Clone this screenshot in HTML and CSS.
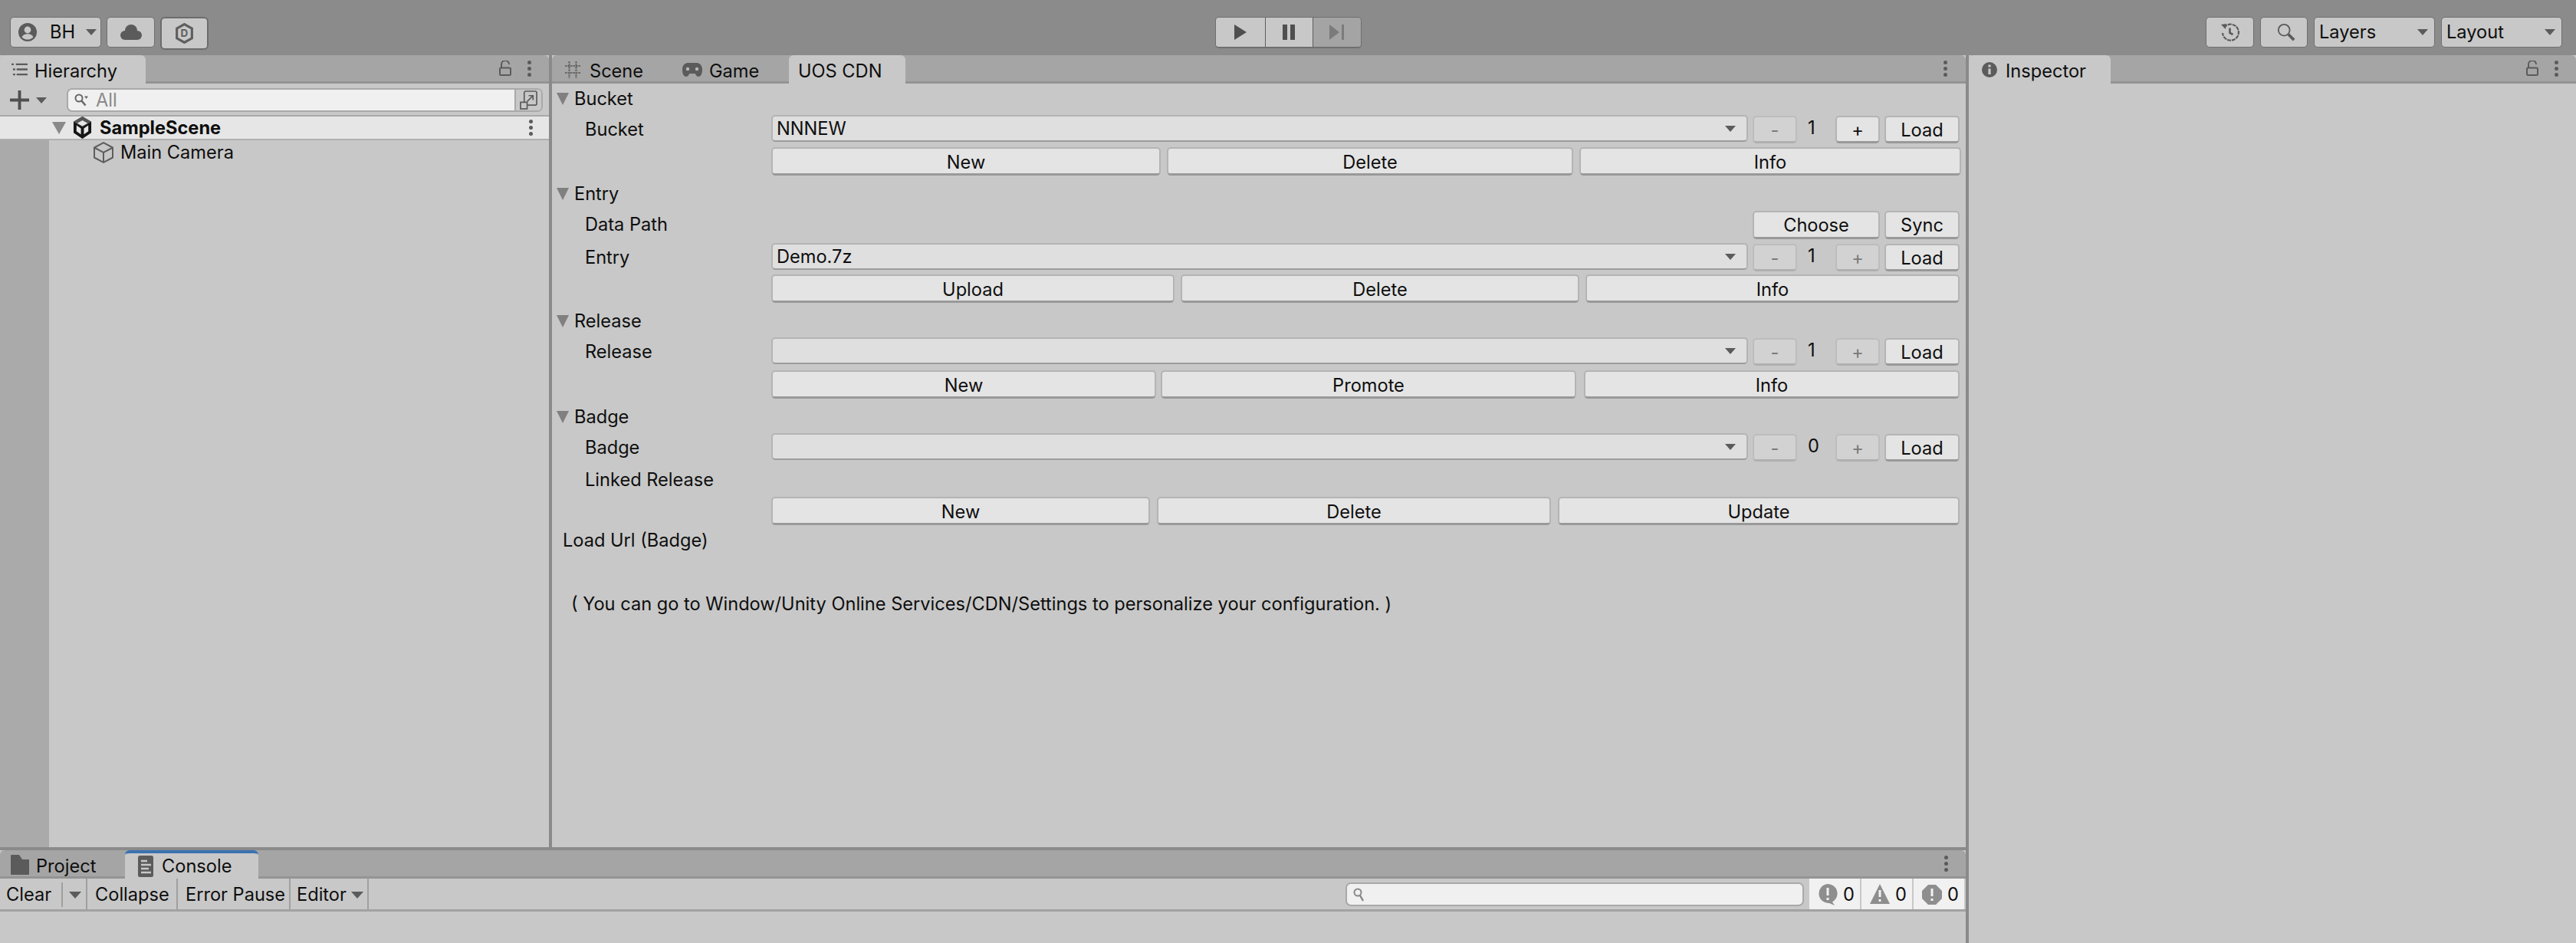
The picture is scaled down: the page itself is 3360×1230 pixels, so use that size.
FILE: index.html
```html
<!DOCTYPE html>
<html lang="en">
<head>
<meta charset="utf-8">
<title>Unity Editor - UOS CDN</title>
<link rel="stylesheet" href="styles.css">
</head>
<body>
<div class="app">
  <header class="toolbar">
    <div class="tb-left">
      <div class="tool tool-account">
        <svg class="ic-user" viewBox="0 0 24 24"><circle cx="12" cy="12" r="12" fill="#5b5b5b"/><circle cx="12" cy="9" r="4.4" fill="#c8c8c8"/><path d="M4.5 18.5c1.5-3.2 4-4.2 7.5-4.2s6 1 7.5 4.2c-2 2-4.6 3.1-7.5 3.1s-5.500-1.100-7.500-3.100z" fill="#c8c8c8"/></svg>
        <span class="tool-name">BH</span>
        <span class="tri tri-dark tri-account"></span>
      </div>
      <div class="tool tool-cloud">
        <svg class="ic-cloud" viewBox="0 0 28 20"><circle cx="14" cy="8" r="8" fill="#5b5b5b"/><circle cx="6" cy="14" r="6" fill="#5b5b5b"/><circle cx="22" cy="14" r="6" fill="#5b5b5b"/><rect x="6" y="10" width="16" height="10" fill="#5b5b5b"/></svg>
      </div>
      <div class="tool tool-d">
        <svg class="ic-hex" viewBox="0 0 22 26"><path d="M11 1.500 20.500 7v12L11 24.500 1.500 19V7z" fill="none" stroke="#5e5e5e" stroke-width="3"/><text x="11" y="17.500" text-anchor="middle" class="hex-letter">D</text></svg>
      </div>
    </div>
    <div class="play">
      <div class="play-btn play-first"><svg class="ic-play" viewBox="0 0 16 20"><path d="M0 0 16 10 0 20z" fill="#4f4f4f"/></svg></div>
      <div class="play-btn"><svg class="ic-pause" viewBox="0 0 16 20"><path d="M0 0h6v20H0zM10 0h6v20h-6z" fill="#4f4f4f"/></svg></div>
      <div class="play-btn play-off"><svg class="ic-step" viewBox="0 0 20 20"><path d="M0 0 13 10 0 20zM16 0h3v20h-3z" fill="#7b7b7b"/></svg></div>
    </div>
    <div class="tb-right">
      <div class="tool tool-sq"><svg class="ic-history" viewBox="0 0 26 26"><path d="M5 7A10.500 10.500 0 1 1 3 14" fill="none" stroke="#5b5b5b" stroke-width="2.200" stroke-dasharray="5 1"/><path d="M1 3l7-1-1 7z" fill="#5b5b5b"/><path d="M12.500 7.500v6.500l4 2" fill="none" stroke="#5b5b5b" stroke-width="2.600"/></svg></div>
      <div class="tool tool-sq2"><svg class="ic-search" viewBox="0 0 26 26"><circle cx="10" cy="10" r="8" fill="none" stroke="#5b5b5b" stroke-width="2"/><path d="M16 16l8 8" stroke="#5b5b5b" stroke-width="4"/></svg></div>
      <div class="tool tool-menu"><span>Layers</span><span class="tri tri-dark"></span></div>
      <div class="tool tool-menu"><span>Layout</span><span class="tri tri-dark"></span></div>
    </div>
  </header>

  <main class="workspace">
    <div class="left-area">
      <div class="upper">
        <section class="panel panel-hier">
          <div class="tabstrip">
            <div class="tab tab-active tab-hier">
              <svg class="ic-tab" viewBox="0 0 22 20"><path d="M0 3h3M6 3h16M2 10h3M7 10h15M2 17h3M7 17h15" stroke="#5b5b5b" stroke-width="2.400" fill="none"/></svg>
              <span>Hierarchy</span>
            </div>
            <div class="strip-tools">
              <svg class="ic-lock" viewBox="0 0 16 20"><path d="M3 9V5a5 5 0 0 1 10 0" fill="none" stroke="#5b5b5b" stroke-width="2"/><rect x="1" y="9.500" width="14" height="9.500" rx="1.500" fill="none" stroke="#5b5b5b" stroke-width="2"/></svg>
              <span class="dots"><i></i><i></i><i></i></span>
            </div>
          </div>
          <div class="hier-bar">
            <svg class="ic-plus" viewBox="0 0 26 26"><path d="M13 0v26M0 13h26" stroke="#4f4f4f" stroke-width="4"/></svg>
            <span class="tri tri-dark tri-plus"></span>
            <div class="search-field">
              <svg class="ic-mag" viewBox="0 0 18 18"><circle cx="6" cy="6" r="4.500" fill="none" stroke="#666" stroke-width="2"/><path d="M9.500 9.500l5 6" stroke="#666" stroke-width="2.500"/><path d="M13 3.500h5L15.500 7z" fill="#666"/></svg>
              <span class="placeholder">All</span>
              <div class="search-mode">
                <svg class="ic-pop" viewBox="0 0 24 26"><rect x="6" y="1" width="17" height="19" rx="2" fill="none" stroke="#5b5b5b" stroke-width="1.800"/><rect x="1" y="16" width="9" height="9" fill="#c8c8c8" stroke="#5b5b5b" stroke-width="1.800"/><path d="M10 15l8-8M12 7h6v6" fill="none" stroke="#5b5b5b" stroke-width="1.800"/></svg>
              </div>
            </div>
          </div>
          <div class="scene-row">
            <span class="tri tri-grey tri-scene"></span>
            <svg class="ic-unity" viewBox="0 0 26 30"><path d="M13 0 25 7v15L13 30 1 22V7z" fill="#151515"/><path d="M13 0 25 7 13 14 1 7z" fill="#555"/><path d="M13 5l7 4-7 4-7-4zM5 12l6 4v8l-6-4zM21 12l-6 4v8l6-4z" fill="#e6e6e6"/></svg>
            <span class="scene-name">SampleScene</span>
            <span class="dots dots-row"><i></i><i></i><i></i></span>
          </div>
          <div class="tree">
            <div class="tree-gutter"></div>
            <div class="tree-item">
              <svg class="ic-cube" viewBox="0 0 26 28"><path d="M13 1.200 25 7.500v13L13 26.800 1 20.500v-13zM1 7.500l12 6.300 12-6.300M13 13.800v13" fill="none" stroke="#5e5e5e" stroke-width="2" stroke-linejoin="round"/></svg>
              <span>Main Camera</span>
            </div>
          </div>
        </section>

        <section class="panel panel-center">
          <div class="tabstrip">
            <div class="tab tab-scene">
              <svg class="ic-hash" viewBox="0 0 20 22"><path d="M5.500 0v22M14.500 0v22M0 6h20M0 15h20" stroke="#666" stroke-width="2.200" stroke-dasharray="2.500 1"/></svg>
              <span>Scene</span>
            </div>
            <div class="tab tab-game">
              <svg class="ic-game" viewBox="0 0 26 18"><path d="M7 0h12c4 0 7 3.500 7 9s-2 9-5 9c-2 0-3-2-4.500-4h-7C8 16 7 18 5 18c-3 0-5-3.500-5-9s3-9 7-9z" fill="#5b5b5b"/><circle cx="7" cy="8" r="2.200" fill="#b8b8b8"/><circle cx="19" cy="8" r="2.200" fill="#b8b8b8"/></svg>
              <span>Game</span>
            </div>
            <div class="tab tab-active tab-cdn"><span>UOS CDN</span></div>
            <div class="strip-tools"><span class="dots"><i></i><i></i><i></i></span></div>
          </div>

          <div class="form">
            <div class="group">
              <div class="group-head"><span class="tri tri-grey tri-fold"></span><span>Bucket</span></div>
              <div class="row gap5">
                <span class="label">Bucket</span>
                <div class="controls">
                  <div class="dropdown"><span>NNNEW</span><span class="tri tri-dark"></span></div>
                  <div class="stepper"><span class="btn btn-small btn-off">-</span><span class="num">1</span><span class="btn btn-small">+</span></div>
                  <span class="btn btn-load">Load</span>
                </div>
              </div>
              <div class="btn-row cols-bucket"><span class="btn">New</span><span class="btn">Delete</span><span class="btn">Info</span></div>
            </div>

            <div class="group">
              <div class="group-head"><span class="tri tri-grey tri-fold"></span><span>Entry</span></div>
              <div class="row row-path gap5">
                <span class="label">Data Path</span>
                <div class="controls controls-end">
                  <span class="btn btn-choose">Choose</span>
                  <span class="btn btn-load">Sync</span>
                </div>
              </div>
              <div class="row gap4">
                <span class="label">Entry</span>
                <div class="controls">
                  <div class="dropdown"><span>Demo.7z</span><span class="tri tri-dark"></span></div>
                  <div class="stepper"><span class="btn btn-small btn-off">-</span><span class="num">1</span><span class="btn btn-small btn-off">+</span></div>
                  <span class="btn btn-load">Load</span>
                </div>
              </div>
              <div class="btn-row cols-entry"><span class="btn">Upload</span><span class="btn">Delete</span><span class="btn">Info</span></div>
            </div>

            <div class="group">
              <div class="group-head"><span class="tri tri-grey tri-fold"></span><span>Release</span></div>
              <div class="row gap6">
                <span class="label">Release</span>
                <div class="controls">
                  <div class="dropdown"><span></span><span class="tri tri-dark"></span></div>
                  <div class="stepper"><span class="btn btn-small btn-off">-</span><span class="num">1</span><span class="btn btn-small btn-off">+</span></div>
                  <span class="btn btn-load">Load</span>
                </div>
              </div>
              <div class="btn-row cols-release"><span class="btn">New</span><span class="btn">Promote</span><span class="btn">Info</span></div>
            </div>

            <div class="group">
              <div class="group-head"><span class="tri tri-grey tri-fold"></span><span>Badge</span></div>
              <div class="row gap6">
                <span class="label">Badge</span>
                <div class="controls">
                  <div class="dropdown"><span></span><span class="tri tri-dark"></span></div>
                  <div class="stepper"><span class="btn btn-small btn-off">-</span><span class="num">0</span><span class="btn btn-small btn-off">+</span></div>
                  <span class="btn btn-load">Load</span>
                </div>
              </div>
              <div class="row row-linked gap4"><span class="label">Linked Release</span></div>
              <div class="btn-row cols-badge"><span class="btn">New</span><span class="btn">Delete</span><span class="btn">Update</span></div>
            </div>

            <div class="load-url">Load Url (Badge)</div>
            <div class="note">( You can go to Window/Unity Online Services/CDN/Settings to personalize your configuration. )</div>
          </div>
        </section>
      </div>

      <section class="panel panel-console">
        <div class="tabstrip tabstrip-console">
          <div class="tab tab-project">
            <svg class="ic-folder" viewBox="0 0 24 26"><path d="M1 0h10l4 6h9v19a1 1 0 0 1-1 1H1a1 1 0 0 1-1-1V1a1 1 0 0 1 1-1z" fill="#5b5b5b"/></svg>
            <span>Project</span>
          </div>
          <div class="tab tab-active tab-console">
            <svg class="ic-log" viewBox="0 0 20 28"><rect width="20" height="28" rx="2.500" fill="#5b5b5b"/><path d="M4 7h8M4 12h13M4 17h10M4 22h13" stroke="#c8c8c8" stroke-width="2.400"/></svg>
            <span>Console</span>
          </div>
          <div class="strip-tools"><span class="dots"><i></i><i></i><i></i></span></div>
        </div>
        <div class="console-bar">
          <div class="cbtn cbtn-clear"><span>Clear</span><span class="vsep"></span><span class="tri tri-dark"></span></div>
          <div class="cbtn cbtn-collapse">Collapse</div>
          <div class="cbtn cbtn-pause">Error Pause</div>
          <div class="cbtn cbtn-editor"><span>Editor</span><span class="tri tri-dark"></span></div>
          <div class="console-search">
            <svg class="ic-mag2" viewBox="0 0 14 18"><circle cx="6" cy="6" r="4.500" fill="none" stroke="#888" stroke-width="2"/><path d="M9 10l4 7" stroke="#888" stroke-width="2.500"/></svg>
          </div>
          <div class="count">
            <svg class="ic-count" viewBox="0 0 26 28"><path d="M13 0a12.500 12.500 0 0 1 6 23.500l3 4.500-7-3A12.500 12.500 0 1 1 13 0z" fill="#8e8e8e"/><path d="M13 5v10M13 18v3" stroke="#f2f2f2" stroke-width="3"/></svg>
            <span>0</span>
          </div>
          <div class="count">
            <svg class="ic-count" viewBox="0 0 26 28"><path d="M13 0 26 26H0z" fill="#8e8e8e"/><path d="M13 8v9M13 20v3" stroke="#f2f2f2" stroke-width="3"/></svg>
            <span>0</span>
          </div>
          <div class="count">
            <svg class="ic-count" viewBox="0 0 26 28"><path d="M8 1h10l8 8v10l-8 8H8l-8-8V9z" fill="#8e8e8e"/><path d="M13 6v10M13 19v3" stroke="#f2f2f2" stroke-width="3"/></svg>
            <span>0</span>
          </div>
        </div>
      </section>
    </div>

    <section class="panel panel-inspector">
      <div class="tabstrip">
        <div class="tab tab-active tab-inspector">
          <svg class="ic-info" viewBox="0 0 20 20"><circle cx="10" cy="10" r="10" fill="#5b5b5b"/><path d="M10 3.500v3M10 8.500V16" stroke="#c8c8c8" stroke-width="3.200"/></svg>
          <span>Inspector</span>
        </div>
        <div class="strip-tools">
          <svg class="ic-lock" viewBox="0 0 16 20"><path d="M3 9V5a5 5 0 0 1 10 0" fill="none" stroke="#5b5b5b" stroke-width="2"/><rect x="1" y="9.500" width="14" height="9.500" rx="1.500" fill="none" stroke="#5b5b5b" stroke-width="2"/></svg>
          <span class="dots"><i></i><i></i><i></i></span>
        </div>
      </div>
    </section>
  </main>
</div>
</body>
</html>
```

FILE: styles.css
```css
* { box-sizing: border-box; }
html, body { margin: 0; height: 100%; }
body {
  width: 3360px;
  height: 1230px;
  overflow: hidden;
  background: #8a8a8a;
  color: #0e0e0e;
  font: 23.6px/1 Inter, "Liberation Sans", sans-serif;
}
svg { display: block; flex: none; }

.app { display: flex; flex-direction: column; height: 1230px; }

/* top toolbar */
.toolbar {
  height: 72px;
  flex: none;
  display: grid;
  grid-template-columns: 1fr auto 1fr;
  align-items: start;
  padding: 22px 18px 0;
  background: #8b8b8b;
}
.tb-left, .tb-right { display: flex; gap: 7px; }
.tb-left { margin-left: -5px; }
.tb-right { justify-content: flex-end; gap: 8px; }
.tool {
  height: 40px;
  display: flex;
  align-items: center;
  justify-content: center;
  background: #c8c8c8;
  border: 1px solid #6f6f6f;
  border-radius: 5px;
}
.tool-account { width: 119px; justify-content: flex-start; padding-left: 10px; }
.tool-name { margin-left: 17px; }
.tri-account { margin-left: 14px; }
.tool-cloud { width: 63px; }
.tool-d { width: 63px; height: 43px; border: 2px solid #6c6c6c; border-radius: 6px; }
.tool-sq { width: 63px; }
.tool-sq2 { width: 62px; }
.tool-menu { width: 158px; justify-content: space-between; padding: 0 8px 0 6px; }

.ic-user { width: 24px; height: 24px; }
.ic-cloud { width: 28px; height: 20px; }
.ic-hex { width: 23px; height: 27px; }
.hex-letter { font: 700 13px Inter, sans-serif; fill: #5e5e5e; }
.ic-history { width: 26px; height: 26px; }
.ic-search { width: 24px; height: 24px; margin-left: 6px; }

.tri { display: block; flex: none; width: 0; height: 0; border-style: solid; border-color: transparent; border-width: 8px 7px 0; }
.tri-dark { border-top-color: #5b5b5b; }
.tri-grey { border-top-color: #7f7f7f; }

.play { display: flex; height: 41px; border: 1px solid #6f6f6f; border-bottom-width: 2px; border-radius: 5px; overflow: hidden; width: 191px; }
.play-btn { flex: 1; display: flex; align-items: center; justify-content: center; background: #c8c8c8; border-right: 1px solid #5e5e5e; }
.play-first { flex: none; width: 65px; }
.play-off { background: #a4a4a4; border-right: 0; }
.ic-play { width: 16px; height: 20px; }
.ic-pause { width: 16px; height: 20px; }
.ic-step { width: 20px; height: 20px; }

/* workspace */
.workspace { flex: 1; display: flex; min-height: 0; }
.left-area { width: 2564px; flex: none; display: flex; flex-direction: column; }
.upper { height: 1033px; flex: none; display: flex; gap: 4px; }
.panel { background: #c8c8c8; display: flex; flex-direction: column; min-width: 0; }
.panel-hier { width: 716px; flex: none; }
.panel-center { flex: 1; }
.panel-console { flex: 1; margin-top: 4px; }
.panel-inspector { flex: 1; margin-left: 4px; }

.tabstrip {
  height: 37px;
  flex: none;
  display: flex;
  background: #a5a5a5;
  border-bottom: 3px solid #949494;
  border-radius: 6px 6px 0 0;
}
.tab {
  height: 37px;
  display: flex;
  align-items: center;
  flex: none;
}
.tab span { padding-top: 5px; }
.tab-active { background: #c8c8c8; border-radius: 6px 6px 0 0; }
.tab-hier { width: 190px; padding-left: 15px; gap: 9px; }
.tab-scene { width: 153px; padding-left: 17px; gap: 12px; }
.tab-game { width: 156px; padding-left: 17px; gap: 9px; }
.tab-cdn { width: 152px; padding-left: 12px; }
.tab-inspector { width: 185px; padding-left: 17px; gap: 11px; }
.tab-project { width: 163px; padding-left: 14px; gap: 9px; }
.tab-console { width: 174px; padding-left: 17px; gap: 11px; border-top: 4px solid #3a72b0; }
.tab-console span { padding-top: 0; }

.ic-tab { width: 21px; height: 19px; }
.ic-hash { width: 20px; height: 22px; }
.ic-game { width: 26px; height: 18px; }
.ic-info { width: 20px; height: 20px; }
.ic-folder { width: 24px; height: 26px; }
.ic-log { width: 20px; height: 28px; }

.strip-tools { margin-left: auto; display: flex; align-items: center; gap: 21px; padding: 0 23px 0 0; }
.ic-lock { width: 16px; height: 20px; }
.dots { display: flex; flex-direction: column; gap: 3px; width: 5px; }
.dots i { display: block; width: 5px; height: 5px; border-radius: 50%; background: #5b5b5b; }
.panel-center .strip-tools { padding-right: 24px; }

/* hierarchy */
.hier-bar {
  height: 41px;
  flex: none;
  display: flex;
  align-items: center;
  padding: 2px 8px 0 13px;
}
.ic-plus { width: 25px; height: 25px; }
.tri-plus { margin-left: 9px; }
.search-field {
  margin-left: 26px;
  flex: 1;
  height: 31px;
  display: flex;
  align-items: center;
  padding-left: 8px;
  background: #f0f0f0;
  border: 2px solid #a9a9a9;
  border-radius: 7px;
  overflow: hidden;
}
.ic-mag { width: 18px; height: 18px; }
.placeholder { margin-left: 10px; color: #8a8a8a; }
.search-mode { margin-left: auto; width: 35px; height: 31px; display: flex; align-items: center; justify-content: center; background: #c8c8c8; border-left: 2px solid #a9a9a9; }
.ic-pop { width: 23px; height: 25px; }

.scene-row {
  height: 33px;
  flex: none;
  display: flex;
  align-items: center;
  background: #e6e6e6;
  border-top: 2px solid #a8a8a8;
  border-bottom: 2px solid #b0b0b0;
  padding-left: 68px;
}
.tri-scene { border-width: 16px 9px 0; border-top-color: #8a8a8a; }
.ic-unity { width: 25px; height: 29px; margin-left: 9px; }
.scene-name { font-weight: 700; margin-left: 10px; }
.dots-row { margin-left: auto; margin-right: 21px; }

.tree { flex: 1; display: flex; }
.tree-gutter { width: 64px; background: #aaa; }
.tree-item { height: 31px; margin-left: 58px; display: flex; align-items: center; gap: 9px; }
.tree-item span { padding-top: 1px; }
.ic-cube { width: 26px; height: 28px; }

/* form */
.form { flex: 1; padding: 3px 8px 0 0; }
.group { margin-bottom: 7px; }
.group-head {
  height: 34px;
  margin-bottom: 4px;
  display: flex;
  align-items: center;
  padding-left: 6px;
  gap: 7px;
}
.tri-fold { border-width: 16px 8px 0; border-top-color: #808080; }
.row { height: 37px; display: flex; }
.gap4 { margin-bottom: 4px; }
.gap5 { margin-bottom: 5px; }
.gap6 { margin-bottom: 6px; }
.row-path { height: 38px; align-items: flex-end; }
.row-linked { height: 36px; align-items: center; }
.label { width: 286px; flex: none; padding-left: 43px; align-self: center; }
.controls { flex: 1; display: flex; gap: 6px; align-items: flex-start; }
.controls-end { justify-content: flex-end; }
.dropdown {
  flex: 1;
  height: 35px;
  display: flex;
  align-items: center;
  justify-content: space-between;
  padding: 1px 14px 0 5px;
  background: #dfdfdf;
  border: 2px solid #b4b4b4;
  border-bottom: 2px solid #9c9c9c;
  border-radius: 5px;
}
.btn {
  display: flex;
  align-items: center;
  justify-content: center;
  height: 37px;
  padding-top: 2px;
  background: #e4e4e4;
  border: 2px solid #b4b4b4;
  border-bottom: 3px solid #999;
  border-radius: 5px;
}
.btn-row .btn { padding-top: 3px; }
.btn-load { width: 98px; height: 36px; margin-top: 1px; }
.row-path .btn-load { margin-top: 0; height: 37px; }
.btn-choose { width: 166px; }
.stepper { width: 166px; display: flex; margin-top: 1px; }
.btn-small { width: 58px; height: 36px; padding-top: 3px; }
.btn-off { background: #d2d2d2; color: #7a7a7a; border-color: #bdbdbd; border-bottom-color: #b0b0b0; }
.num { flex: 1; padding: 0 0 4px 14px; display: flex; align-items: center; }

.btn-row { margin-left: 286px; display: grid; }
.cols-bucket { grid-template-columns: 508px 530px 1fr; gap: 8px; margin-right: -2px; }
.cols-entry { grid-template-columns: 526px 520px 1fr; gap: 8px; }
.cols-release { grid-template-columns: 502px 542px 1fr; gap: 6px; }
.cols-release .btn:last-child { margin-left: 4px; }
.cols-badge { grid-template-columns: 494px 514px 1fr; gap: 9px; }

.load-url { margin-top: -5px; height: 36px; padding-left: 14px; display: flex; align-items: center; }
.note { margin-top: 47px; height: 36px; padding-left: 25px; display: flex; align-items: center; }

/* console */
.tabstrip-console { border-radius: 6px 6px 0 0; }
.console-bar {
  height: 43px;
  flex: none;
  display: flex;
  align-items: stretch;
  border-bottom: 3px solid #a2a2a2;
}
.cbtn { display: flex; align-items: center; padding-top: 2px; border-right: 2px solid #a0a0a0; }
.cbtn-clear { width: 114px; padding-left: 8px; }
.vsep { width: 2px; height: 32px; margin: 0 8px 0 13px; background: #a0a0a0; }
.cbtn-clear .tri, .cbtn-editor .tri { border-width: 9px 8px 0; }
.cbtn-collapse { width: 118px; padding-left: 10px; }
.cbtn-pause { width: 147px; padding-left: 10px; }
.cbtn-editor { width: 102px; padding-left: 8px; gap: 6px; }
.console-search {
  margin: 5px 0 0 auto;
  width: 598px;
  height: 31px;
  display: flex;
  align-items: center;
  padding-left: 8px;
  background: #f0f0f0;
  border: 2px solid #a9a9a9;
  border-radius: 7px;
}
.ic-mag2 { width: 14px; height: 18px; }
.count {
  width: 66px;
  margin-left: 2px;
  display: flex;
  align-items: center;
  gap: 7px;
  padding: 2px 0 0 11px;
  background: #f1f1f1;
}
.console-search + .count { margin-left: 7px; }
.count:last-child { margin-right: 2px; }
.ic-count { width: 26px; height: 28px; }
```
